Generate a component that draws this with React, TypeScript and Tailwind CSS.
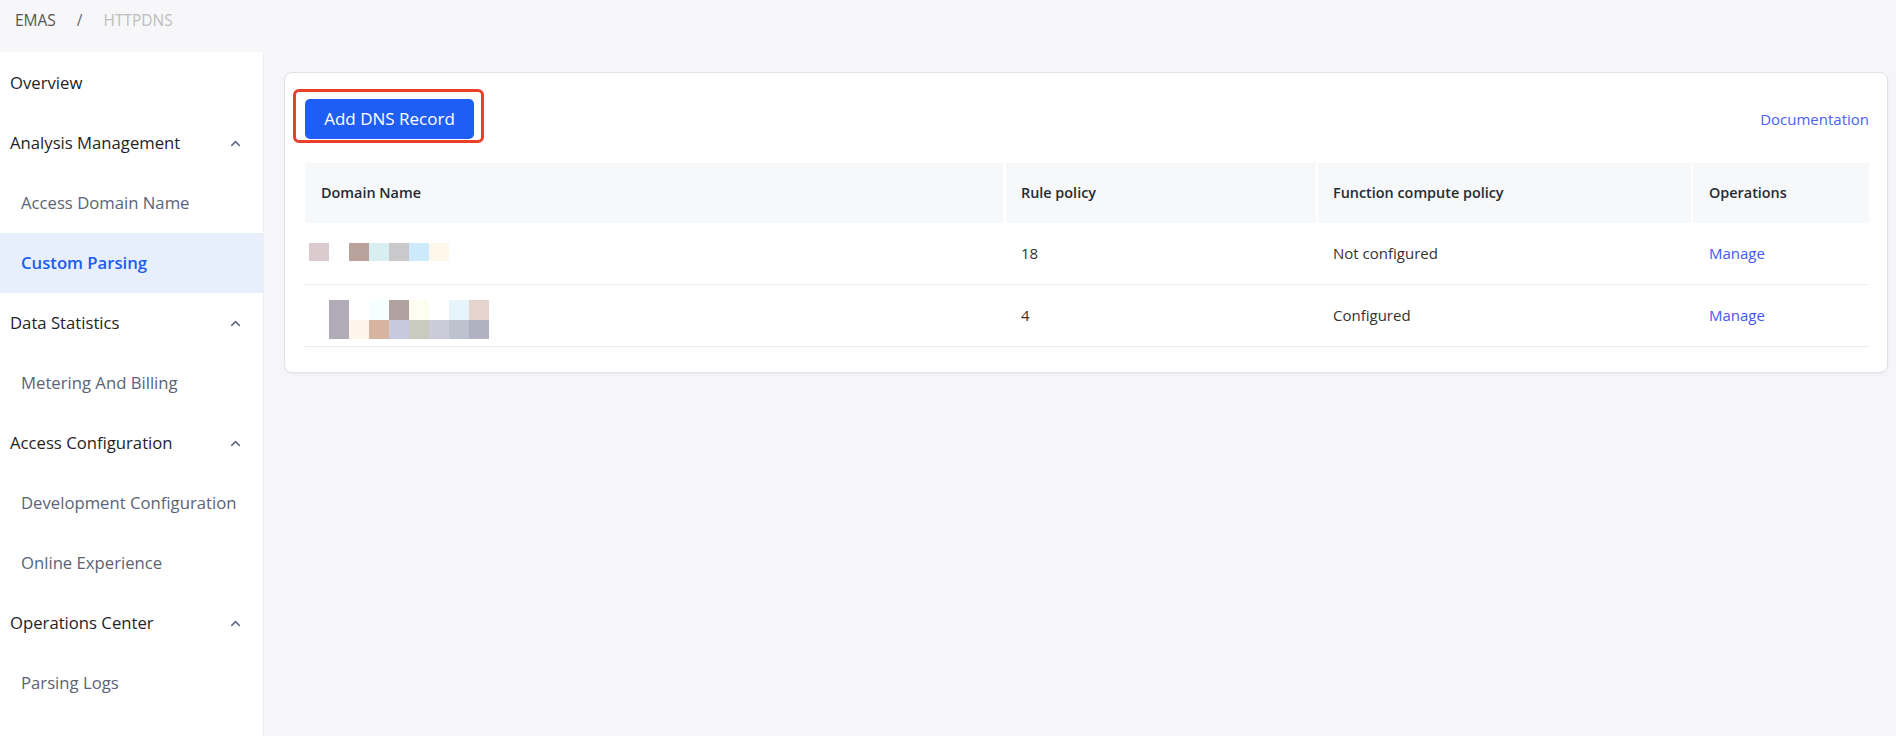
import { ChevronUp } from 'lucide-react';

type NavItem = { label: string; level: 0 | 1; active?: boolean; group?: boolean };

const nav: NavItem[] = [
  { label: 'Overview', level: 0 },
  { label: 'Analysis Management', level: 0, group: true },
  { label: 'Access Domain Name', level: 1 },
  { label: 'Custom Parsing', level: 1, active: true },
  { label: 'Data Statistics', level: 0, group: true },
  { label: 'Metering And Billing', level: 1 },
  { label: 'Access Configuration', level: 0, group: true },
  { label: 'Development Configuration', level: 1 },
  { label: 'Online Experience', level: 1 },
  { label: 'Operations Center', level: 0, group: true },
  { label: 'Parsing Logs', level: 1 },
];

// blurred domain names, drawn as mosaic blocks
const mosaicA = ['#dbcace', '#ffffff', '#b9a19c', '#d9eef0', '#c9c9cc', '#cdeafd', '#fff7e9'];
const mosaicB = [
  ['#ffffff', '#b1aab7', '#ffffff', '#f6ffff', '#b0a19e', '#fefef0', '#ffffff', '#e6f5fc', '#e5d4cd'],
  ['#ffffff', '#b1aab7', '#fff5ea', '#d7b4a0', '#c7cade', '#c9cbbf', '#cbccd9', '#bcc3ce', '#b0b1c1'],
];

const cols = 'grid grid-cols-[698px_313px_375px_1fr]';

function Sidebar() {
  return (
    <aside className="w-[264px] shrink-0 bg-white border-r border-[#eceef2] pt-px">
      {nav.map(item => (
        <div
          key={item.label}
          className={
            'h-[60px] flex items-center justify-between pr-[20px] text-[16.7px] ' +
            (item.level === 0 ? 'pl-[10px] text-[#1f2329] ' : 'pl-[21px] text-[#5b6375] ') +
            (item.active ? 'bg-[#e7eefc] !text-[#1d5cf0] font-semibold' : '')
          }
        >
          <span>{item.label}</span>
          {item.group && <ChevronUp size={15} strokeWidth={2.5} className="text-[#5f6b86]" />}
        </div>
      ))}
    </aside>
  );
}

function DomainTable() {
  return (
    <div className="text-[15px]">
      <div className={cols + ' h-[60px] text-[14.4px] font-semibold text-[#262a33]'}>
        <div className="bg-[#f7f8fa] flex items-center pl-[16px]">Domain Name</div>
        <div className="bg-[#f7f8fa] flex items-center pl-[15px] ml-[3px]">Rule policy</div>
        <div className="bg-[#f7f8fa] flex items-center pl-[15px] ml-[2px]">Function compute policy</div>
        <div className="bg-[#f7f8fa] flex items-center pl-[16px] ml-[2px]">Operations</div>
      </div>

      <div className={cols + ' h-[62px] border-b border-[#e9ebef] text-[#333]'}>
        <div className="flex items-center pl-[4px] pb-[4px]">
          {mosaicA.map((c, i) => (
            <div key={i} className="w-[20px] h-[18px]" style={{ backgroundColor: c }} />
          ))}
        </div>
        <div className="flex items-center pl-[18px]">18</div>
        <div className="flex items-center pl-[17px]">Not configured</div>
        <div className="flex items-center pl-[18px]">
          <a className="text-[#4459f2] cursor-pointer">Manage</a>
        </div>
      </div>

      <div className={cols + ' h-[62px] border-b border-[#e9ebef] text-[#333]'}>
        <div className="flex flex-col justify-center pl-[4px] pt-[8px]">
          {mosaicB.map((row, r) => (
            <div key={r} className="flex">
              {row.map((c, i) => (
                <div key={i} className={'w-[20px] ' + (r === 0 ? 'h-[20px]' : 'h-[19px]')} style={{ backgroundColor: c }} />
              ))}
            </div>
          ))}
        </div>
        <div className="flex items-center pl-[18px]">4</div>
        <div className="flex items-center pl-[17px]">Configured</div>
        <div className="flex items-center pl-[18px]">
          <a className="text-[#4459f2] cursor-pointer">Manage</a>
        </div>
      </div>
    </div>
  );
}

export default function App() {
  return (
    <div className="w-[1896px] h-[736px] flex flex-col bg-[#f6f6f8] font-['Open_Sans',sans-serif] overflow-hidden">
      <header className="h-[52px] shrink-0 flex items-center pl-[15px] pb-[10px] text-[15.5px] bg-[#f7f7f9]">
        <span className="text-[#555]">EMAS</span>
        <span className="text-[#666] ml-[21px]">/</span>
        <span className="text-[#bdbdbd] ml-[21px]">HTTPDNS</span>
      </header>

      <div className="flex flex-1 min-h-0">
        <Sidebar />

        <main className="flex-1 pt-[20px] pl-[20px] pr-[8px]">
          <div className="bg-white border border-[#dfe2ea] rounded-[8px] shadow-[0_1px_3px_rgba(0,0,0,0.05)] pl-[20px] pr-[18px] pt-[26px] pb-[25px]">
            <div className="flex items-center justify-between mb-[24px]">
              <div className="relative">
                <button className="h-[40px] w-[169px] rounded-[5px] bg-[#1f5ef4] text-white text-[17px]">
                  Add DNS Record
                </button>
                <div className="absolute left-[-12px] top-[-10px] w-[191px] h-[54px] border-[3px] border-[#e8402b] rounded-[6px] pointer-events-none" />
              </div>
              <a className="text-[15px] text-[#4c61f5] cursor-pointer">Documentation</a>
            </div>
            <DomainTable />
          </div>
        </main>
      </div>
    </div>
  );
}
